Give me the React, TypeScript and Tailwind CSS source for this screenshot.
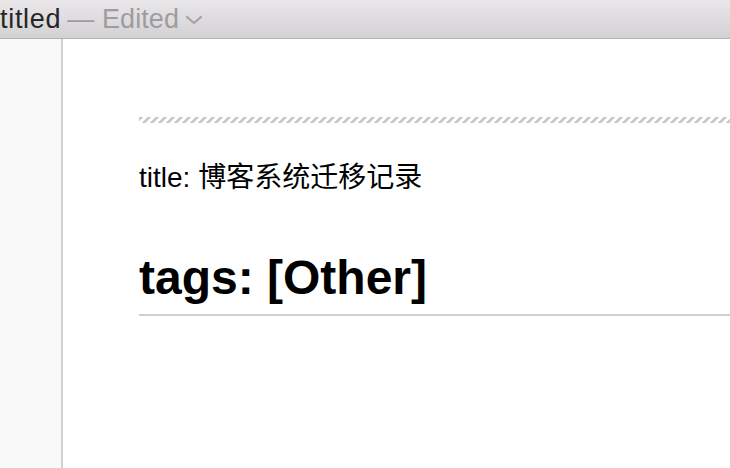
import React from 'react'

const font = "font-['Liberation_Sans','Noto_Sans_CJK_SC',sans-serif]"

const TitleBar = () => (
    <div className='h-[39px] flex items-center border-b border-[#b3b3b3] bg-[linear-gradient(to_bottom,#e9e7e9,#d3d1d3)]'>
        <span className='text-[27px] leading-[30px] tracking-[0.7px] text-[#262626]'>titled</span>
        <span className='text-[27px] leading-[30px] tracking-[0.1px] text-[#9d9d9d] ml-[6px]'>— Edited</span>
        <svg width='18' height='10' viewBox='0 0 18 10' className='ml-[6px] mt-[1px]'>
            <polyline points='2,2 9,8 16,2' fill='none' stroke='#a3a3a3' strokeWidth='2.2' strokeLinecap='round' strokeLinejoin='round' />
        </svg>
    </div>
)

const App = () => {
    return (
        <div className={`w-[730px] h-[468px] overflow-hidden bg-white flex flex-col ${font}`}>
            <TitleBar />
            <div className='flex flex-1'>
                {/* sidebar */}
                <div className='w-[63px] shrink-0 bg-[#f9f9f9] border-r-2 border-[#d2d2d2]'></div>

                {/* editor */}
                <div className='flex-1 pl-[76px] pt-[78px]'>
                    <div className='h-[6px] bg-[repeating-linear-gradient(-45deg,#cbcbcb_0_3.3px,transparent_3.3px_5.66px)]'></div>
                    <p className='mt-[39px] text-[28px] leading-[32px] text-black'>title: 博客系统迁移记录</p>
                    <h1 className='mt-[56px] text-[48px] leading-[55px] font-bold text-black pb-[9px] border-b-2 border-[#cfcfcf]'>
                        tags: [Other]
                    </h1>
                </div>
            </div>
        </div>
    )
}

export default App
